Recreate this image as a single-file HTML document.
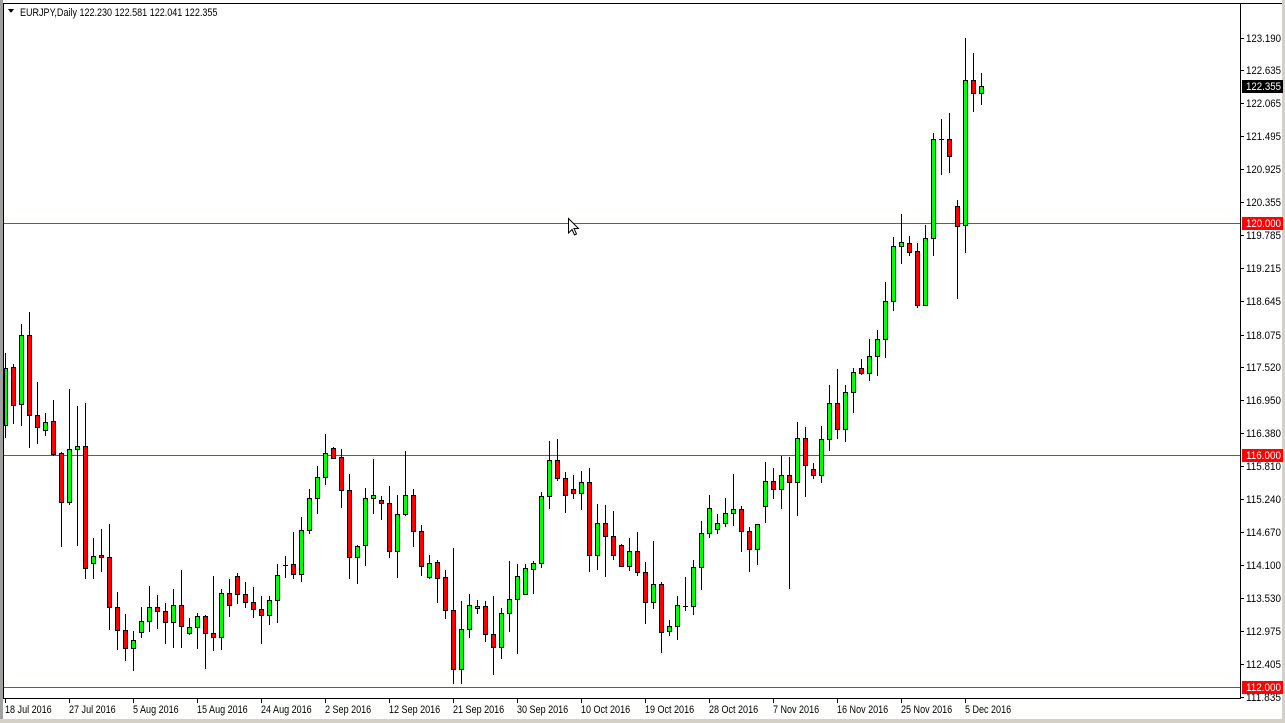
<!DOCTYPE html>
<html><head><meta charset="utf-8"><style>
html,body{margin:0;padding:0;background:#fff;width:1285px;height:723px;overflow:hidden}
svg{display:block}
text{font-family:"Liberation Sans",sans-serif;font-size:11px}
</style></head><body>
<svg id="s" width="1285" height="723" viewBox="0 0 1285 723" shape-rendering="crispEdges">
<rect x="0" y="0" width="1285" height="723" fill="#fff"/>
<rect x="0" y="0" width="3" height="723" fill="#a0a0a0"/>
<rect x="3" y="3" width="1" height="696" fill="#000"/>
<rect x="3" y="3" width="1282" height="1" fill="#000"/>
<rect x="1282" y="0" width="3" height="723" fill="#d4d0c8"/>
<rect x="0" y="719" width="1285" height="4" fill="#d4d0c8"/>
<rect x="1240" y="3" width="1" height="696" fill="#000"/>
<rect x="3" y="698" width="1238" height="1" fill="#000"/>
<rect x="4" y="223" width="1236" height="1" fill="#5a6b2a"/>
<rect x="4" y="455" width="1236" height="1" fill="#5a6b2a"/>
<rect x="4" y="687" width="1236" height="1" fill="#5a6b2a"/>
<polygon points="8,9 14,9 11,13" fill="#000"/>
<text class="s" x="20" y="16" fill="#000">EURJPY,Daily  122.230 122.581 122.041 122.355</text>
<g id="c"></g>
<g fill="#000">
<text x="1246" y="42">123.190</text><text x="1246" y="74">122.635</text><text x="1246" y="107">122.065</text>
<text x="1246" y="140">121.495</text><text x="1246" y="173">120.925</text><text x="1246" y="206">120.355</text>
<text x="1246" y="239">119.785</text><text x="1246" y="272">119.215</text><text x="1246" y="305">118.645</text>
<text x="1246" y="339">118.075</text><text x="1246" y="371">117.520</text><text x="1246" y="404">116.950</text>
<text x="1246" y="437">116.380</text><text x="1246" y="470">115.810</text><text x="1246" y="503">115.240</text>
<text x="1246" y="536">114.670</text><text x="1246" y="569">114.100</text><text x="1246" y="602">113.530</text>
<text x="1246" y="635">112.975</text><text x="1246" y="668">112.405</text><text x="1246" y="701">111.835</text>
</g>
<g fill="#000" id="ticks"></g>
<rect x="1242" y="80" width="41" height="13" fill="#000"/><text x="1246" y="90" fill="#fff">122.355</text>
<rect x="1242" y="217" width="41" height="13" fill="#ff0000"/><text x="1246" y="227" fill="#fff">120.000</text>
<rect x="1242" y="449" width="41" height="13" fill="#ff0000"/><text x="1246" y="459" fill="#fff">116.000</text>
<rect x="1242" y="681" width="41" height="13" fill="#ff0000"/><text x="1246" y="691" fill="#fff">112.000</text>
<g fill="#000">
<text x="5" y="713">18 Jul 2016</text><text x="69" y="713">27 Jul 2016</text><text x="133" y="713">5 Aug 2016</text>
<text x="197" y="713">15 Aug 2016</text><text x="261" y="713">24 Aug 2016</text><text x="325" y="713">2 Sep 2016</text>
<text x="389" y="713">12 Sep 2016</text><text x="453" y="713">21 Sep 2016</text><text x="517" y="713">30 Sep 2016</text>
<text x="581" y="713">10 Oct 2016</text><text x="645" y="713">19 Oct 2016</text><text x="709" y="713">28 Oct 2016</text>
<text x="773" y="713">7 Nov 2016</text><text x="837" y="713">16 Nov 2016</text><text x="901" y="713">25 Nov 2016</text>
<text x="965" y="713">5 Dec 2016</text>
</g>
<path d="M568.5 218.5 L568.5 233 L572 229.5 L574.5 235 L576.5 234 L574 228.5 L578.5 228.5 Z" fill="#fff" stroke="#000" stroke-width="1" shape-rendering="auto"/>
</svg>
<script>
var d=[
['g',368,425,353,437],['r',367,405,364,423],['g',335,404,324,425],['r',335,415,312,447],['r',415,427,382,443],
['g',422,430,413,435],['r',421,454,400,455],['r',453,502,452,546],['g',449,502,389,504],['g',446,449,406,545],
['r',446,568,403,578],['g',556,563,538,578],['r',555,557,529,571],['r',557,607,524,629],['r',607,630,592,649],
['r',630,648,614,660],['g',640,648,631,670],['g',621,632,607,637],['g',607,621,586,631],['r',607,611,595,628],
['r',611,622,603,643],['g',605,622,589,647],['r',605,626,570,647],['g',627,633,618,634],['g',616,627,613,648],
['r',616,633,615,668],['r',633,637,576,650],['g',593,637,589,649],['r',593,605,579,616],['r',576,594,573,603],
['r',594,602,582,607],['r',602,609,587,617],['r',609,615,596,643],['g',600,615,596,624],['g',575,600,564,622],
['d',565,565,556,577],['r',564,574,532,578],['g',530,574,517,581],['g',498,530,489,533],['g',477,498,466,513],
['g',453,477,434,484],['r',448,458,447,458],['r',457,490,449,507],['r',490,557,474,578],['g',546,557,545,583],
['g',498,545,488,565],['g',495,498,459,513],['r',500,503,496,519],['r',503,551,486,557],['g',514,551,495,577],
['g',495,514,451,515],['r',495,531,489,546],['r',531,566,525,575],['g',563,577,555,578],['r',562,578,560,602],
['r',577,610,570,618],['r',610,669,548,683],['g',629,669,601,683],['g',605,629,594,637],['g',606,608,600,613],
['r',606,634,601,641],['r',634,647,596,674],['g',613,647,608,658],['g',599,613,561,631],['g',576,599,564,653],
['g',568,594,564,594],['g',563,569,561,593],['g',496,563,492,567],['g',460,496,441,508],['r',460,478,439,480],
['r',478,495,472,512],['r',489,493,475,498],['g',482,493,471,509],['r',482,555,468,571],['g',523,555,504,569],
['r',523,536,505,576],['r',536,555,511,559],['r',545,566,544,566],['g',551,566,538,570],['r',551,572,532,575],
['r',572,602,562,623],['g',584,602,541,608],['r',584,632,582,652],['g',626,631,620,635],['g',605,626,596,639],
['d',606,606,577,610],['g',567,606,560,614],['g',533,567,521,589],['g',508,533,495,537],['g',523,529,514,533],
['g',513,523,498,526],['g',509,513,474,525],['r',509,531,506,551],['r',531,549,527,571],['g',524,549,524,564],
['g',481,506,462,522],['r',481,489,468,498],['g',475,489,456,508],['r',475,482,457,588],['g',438,482,422,515],
['r',438,465,427,496],['r',469,475,463,478],['g',439,475,426,482],['g',403,439,385,450],['r',403,429,369,438],
['g',392,429,385,441],['g',372,392,368,412],['r',368,373,359,374],['g',356,373,339,380],['g',339,356,330,375],
['g',301,339,282,357],['g',246,301,237,310],['g',242,246,214,263],['r',243,252,236,255],['r',251,305,243,307],
['g',238,305,225,305],['g',139,238,133,255],['d',139,139,119,174],['r',139,156,113,172],['r',206,226,200,298],
['g',80,225,38,252],['r',80,93,53,111],['g',86,93,73,104]
];
var h='';
for(var i=0;i<d.length;i++){
 var c=d[i],x=5+8*i,t=c[1],b=c[2],hi=c[3],lo=c[4];
 if(hi>t)hi=t; if(lo<b)lo=b;
 h+='<rect x="'+x+'" y="'+hi+'" width="1" height="'+(lo-hi+1)+'" fill="#000"/>';
 if(c[0]=='d'){h+='<rect x="'+(x-2)+'" y="'+t+'" width="5" height="1" fill="#000"/>';continue;}
 var bh=Math.max(b-t+1,3);
 var x0=Math.max(x-2,4);
 h+='<rect x="'+x0+'" y="'+t+'" width="'+(x+3-x0)+'" height="'+bh+'" fill="#000"/>';
 if(bh>2&&x+2-(x0+1)>0)h+='<rect x="'+(x0+1)+'" y="'+(t+1)+'" width="'+(x+2-(x0+1))+'" height="'+(bh-2)+'" fill="'+(c[0]=='g'?'#00ff00':'#ff0000')+'"/>';
}
document.getElementById('c').innerHTML=h;
var tk='',ys=[38,70,103,136,169,202,235,268,301,335,367,400,433,466,499,532,565,598,631,664,697];
for(var j=0;j<ys.length;j++)tk+='<rect x="1241" y="'+ys[j]+'" width="3" height="1"/>';
for(var k=0;k<16;k++)tk+='<rect x="'+(5+64*k)+'" y="699" width="1" height="4"/>';
document.getElementById('ticks').innerHTML=tk;
var ts=document.querySelectorAll('text');
for(var m=0;m<ts.length;m++){
 var L=ts[m].getComputedTextLength();
 var f=/^\d{3}\.\d{3}$/.test(ts[m].textContent)?35/L:0.82;
 ts[m].setAttribute('textLength',(L*f).toFixed(1));
 ts[m].setAttribute('lengthAdjust','spacingAndGlyphs');
}
</script>
</body></html>
